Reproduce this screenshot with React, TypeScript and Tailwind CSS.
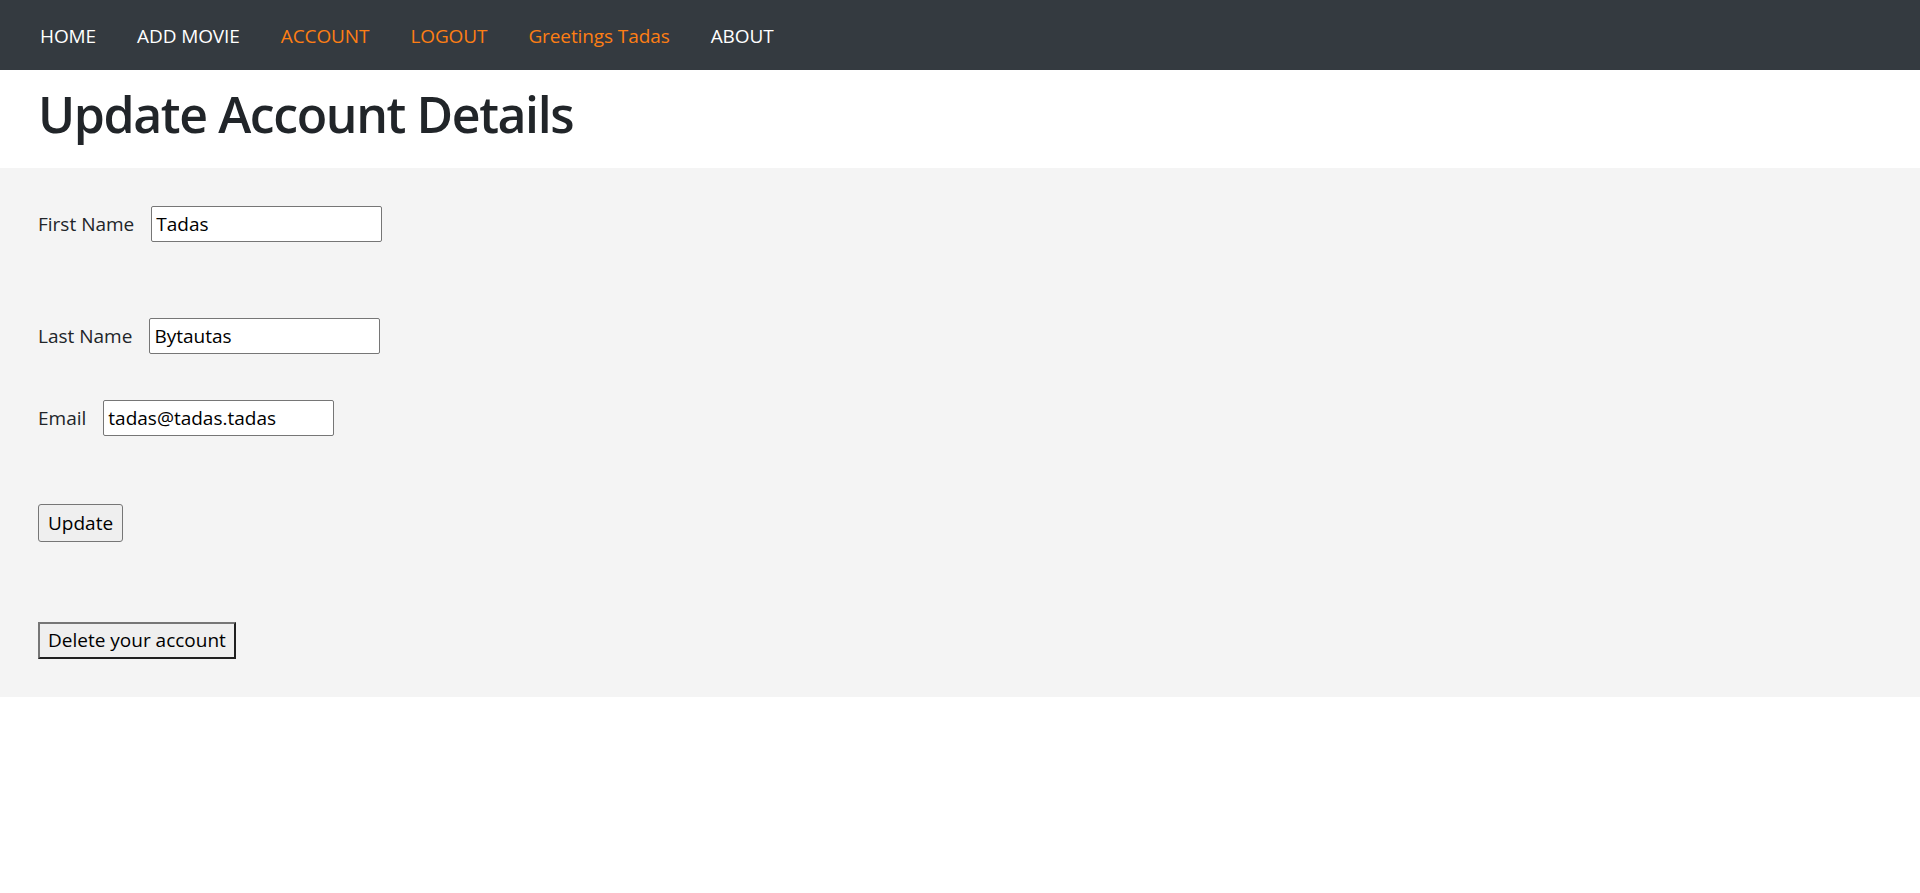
import React, { useState } from "react";

const links = [
  { label: "HOME", active: false },
  { label: "ADD MOVIE", active: false },
  { label: "ACCOUNT", active: true },
  { label: "LOGOUT", active: true },
  { label: "Greetings Tadas", active: true },
  { label: "ABOUT", active: false },
];

const Navbar = () => {
  return (
    <nav className="navbar flex items-center h-[70px] bg-[#343a40] pl-[40px] pt-[2px] gap-[41px]">
      {links.map((link) => (
        <a
          key={link.label}
          href="#"
          className={
            link.active
              ? "nav-link text-[19px] tracking-[-0.1px] text-[#fd7e14]"
              : "nav-link text-[19px] tracking-[-0.1px] text-white"
          }
        >
          {link.label}
        </a>
      ))}
    </nav>
  );
};

interface FieldProps {
  label: string;
  value: string;
  onChange: (value: string) => void;
  className?: string;
}

const Field = ({ label, value, onChange, className }: FieldProps) => {
  return (
    <div className={"account-form--row flex items-center " + (className ?? "")}>
      <label className="text-[19px] text-[#212529] mr-[17px]">{label}</label>
      <input
        className="w-[231px] h-[36px] border border-[#767676] rounded-[2px] bg-white px-[4px] text-[19px] text-black outline-none"
        value={value}
        onChange={(e) => onChange(e.target.value)}
      />
    </div>
  );
};

export default function App() {
  const [firstName, setFirstName] = useState("Tadas");
  const [lastName, setLastName] = useState("Bytautas");
  const [email, setEmail] = useState("tadas@tadas.tadas");

  return (
    <div className="min-h-[893px] bg-white font-['Open_Sans',sans-serif]">
      <Navbar />
      <div className="account-header h-[98px] px-[38px] pt-[14px]">
        <h1 className="text-[50px] leading-[60px] font-semibold tracking-[-1.4px] text-[#212529]">
          Update Account Details
        </h1>
      </div>
      <div className="account-form bg-[#f4f4f4] px-[38px] pt-[38px] pb-[38px]">
        <Field label="First Name" value={firstName} onChange={setFirstName} />
        <Field label="Last Name" value={lastName} onChange={setLastName} className="mt-[76px]" />
        <Field label="Email" value={email} onChange={setEmail} className="mt-[46px]" />
        <button className="mt-[68px] block h-[38px] px-[9px] border border-[#767676] rounded-[3px] bg-[#efefef] text-[19px] text-black">
          Update
        </button>
        <button className="mt-[80px] block h-[37px] px-[8px] border-2 border-t-[#767676] border-l-[#767676] border-r-[#202020] border-b-[#202020] bg-[#efefef] text-[19px] text-black">
          Delete your account
        </button>
      </div>
    </div>
  );
}
